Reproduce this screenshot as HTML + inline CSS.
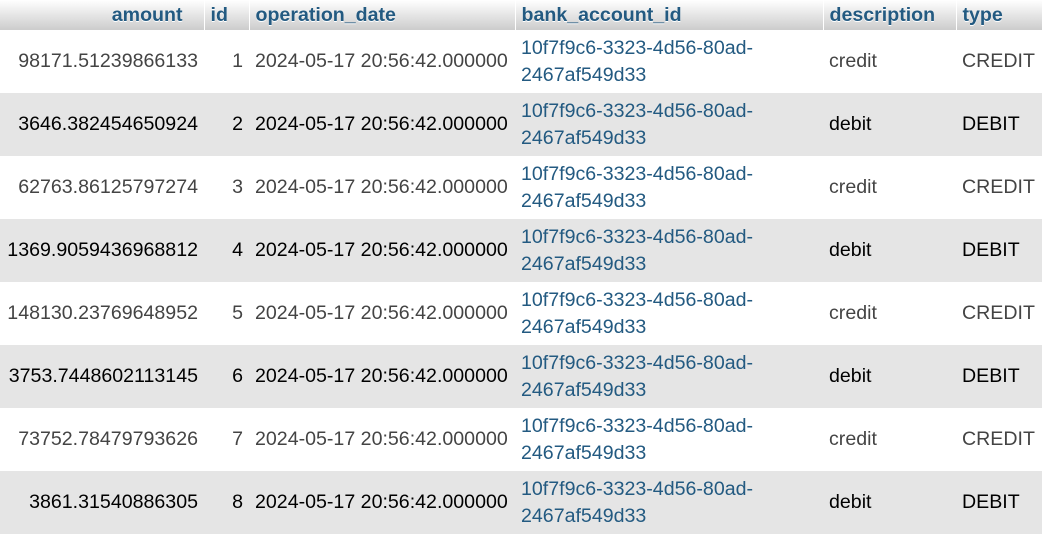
<!DOCTYPE html>
<html><head><style>
body{margin:0;width:1042px;height:532px;overflow:hidden;background:#fff;font-family:"Liberation Sans",Arial,sans-serif;font-size:19.6px;}
table{border-collapse:collapse;table-layout:fixed;width:1042px;position:absolute;left:0;top:0;}
th{height:30px;padding:0 6px;background:linear-gradient(#fff,#ccc);color:#235a81;font-weight:bold;text-align:left;border-right:1px solid #fff;text-shadow:0 1px 0 #fff;white-space:nowrap;}
th.r{text-align:right;padding-right:21px}
td{height:63px;padding:0 6px;vertical-align:middle;white-space:nowrap;line-height:27px;}
tr.o td{background:#fff;color:#444}
tr.e td{background:#e5e5e5;color:#000}
td.r{text-align:right}
td a{color:#235a81;text-decoration:none}
</style></head><body>
<table>
<colgroup><col style="width:204px"><col style="width:45px"><col style="width:266px"><col style="width:308px"><col style="width:133px"><col style="width:86px"></colgroup>
<tr><th class="r">amount</th><th>id</th><th>operation_date</th><th>bank_account_id</th><th>description</th><th>type</th></tr>
<tr class="o"><td class="r">98171.51239866133</td><td class="r">1</td><td>2024-05-17 20:56:42.000000</td><td><a>10f7f9c6-3323-4d56-80ad-<br>2467af549d33</a></td><td>credit</td><td>CREDIT</td></tr>
<tr class="e"><td class="r">3646.382454650924</td><td class="r">2</td><td>2024-05-17 20:56:42.000000</td><td><a>10f7f9c6-3323-4d56-80ad-<br>2467af549d33</a></td><td>debit</td><td>DEBIT</td></tr>
<tr class="o"><td class="r">62763.86125797274</td><td class="r">3</td><td>2024-05-17 20:56:42.000000</td><td><a>10f7f9c6-3323-4d56-80ad-<br>2467af549d33</a></td><td>credit</td><td>CREDIT</td></tr>
<tr class="e"><td class="r">1369.9059436968812</td><td class="r">4</td><td>2024-05-17 20:56:42.000000</td><td><a>10f7f9c6-3323-4d56-80ad-<br>2467af549d33</a></td><td>debit</td><td>DEBIT</td></tr>
<tr class="o"><td class="r">148130.23769648952</td><td class="r">5</td><td>2024-05-17 20:56:42.000000</td><td><a>10f7f9c6-3323-4d56-80ad-<br>2467af549d33</a></td><td>credit</td><td>CREDIT</td></tr>
<tr class="e"><td class="r">3753.7448602113145</td><td class="r">6</td><td>2024-05-17 20:56:42.000000</td><td><a>10f7f9c6-3323-4d56-80ad-<br>2467af549d33</a></td><td>debit</td><td>DEBIT</td></tr>
<tr class="o"><td class="r">73752.78479793626</td><td class="r">7</td><td>2024-05-17 20:56:42.000000</td><td><a>10f7f9c6-3323-4d56-80ad-<br>2467af549d33</a></td><td>credit</td><td>CREDIT</td></tr>
<tr class="e"><td class="r">3861.31540886305</td><td class="r">8</td><td>2024-05-17 20:56:42.000000</td><td><a>10f7f9c6-3323-4d56-80ad-<br>2467af549d33</a></td><td>debit</td><td>DEBIT</td></tr>
</table>
</body></html>
